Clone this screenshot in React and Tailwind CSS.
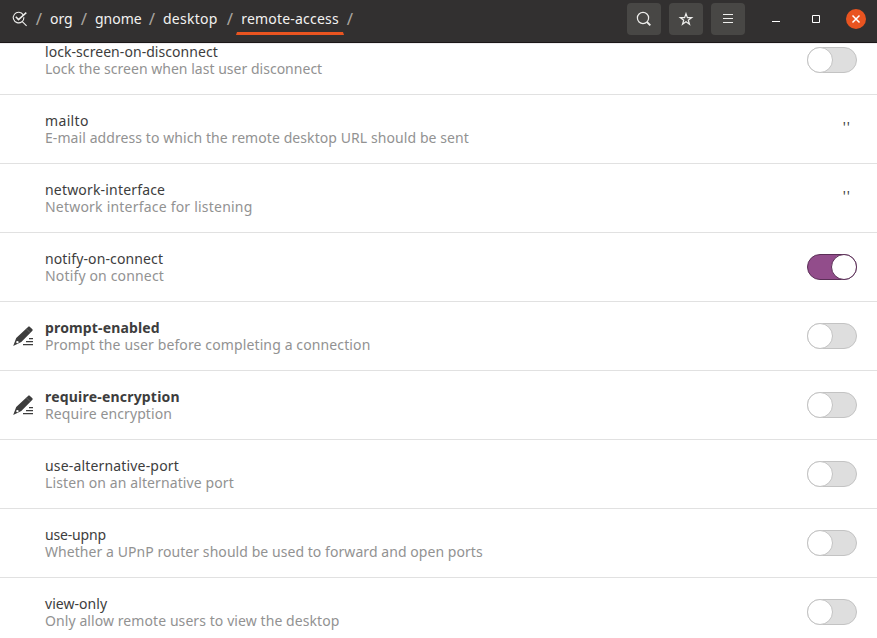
const rows = [
  { key: 'lock-screen-on-disconnect', text: 'Lock the screen when last user disconnect', on: false, kt: 'tracking-[0.06px]', dt: 'tracking-[0.02px]' },
  { key: 'mailto', text: 'E-mail address to which the remote desktop URL should be sent', value: "''", kt: 'tracking-[0.35px]', dt: 'tracking-[0.08px]' },
  { key: 'network-interface', text: 'Network interface for listening', value: "''", kt: 'tracking-[0.18px]', dt: 'tracking-[0.21px]' },
  { key: 'notify-on-connect', text: 'Notify on connect', on: true, kt: 'tracking-[0.12px]', dt: 'tracking-[0.16px]' },
  { key: 'prompt-enabled', text: 'Prompt the user before completing a connection', on: false, edited: true, kt: 'tracking-[0.15px]', dt: 'tracking-[0.12px]' },
  { key: 'require-encryption', text: 'Require encryption', on: false, edited: true, kt: 'tracking-[0.2px]', dt: 'tracking-[0.11px]' },
  { key: 'use-alternative-port', text: 'Listen on an alternative port', on: false, kt: 'tracking-[0.17px]', dt: 'tracking-[0.11px]' },
  { key: 'use-upnp', text: 'Whether a UPnP router should be used to forward and open ports', on: false, kt: 'tracking-[-0.18px]', dt: 'tracking-[0.06px]' },
  { key: 'view-only', text: 'Only allow remote users to view the desktop', on: false, kt: 'tracking-[0.05px]', dt: 'tracking-[0.08px]' },
];

function Toggle({ on }) {
  return (
    <div className={`flex h-[26px] w-[50px] rounded-full border ${on ? 'justify-end border-[#5b2f57] bg-[#924d8b]' : 'justify-start border-[#c3c3c3] bg-[#dedede]'}`}>
      <div className={`-m-px size-[26px] rounded-full border bg-white ${on ? 'border-[#5b2f57]' : 'border-[#c3c3c3]'}`} />
    </div>
  );
}

function EditIcon() {
  return (
    <svg width="22" height="22" viewBox="0 0 22 22" fill="#3d3d3d">
      <path d="M16.3 1.7a1 1 0 0 1 1.4 0l2.7 2.6a1 1 0 0 1 0 1.4L9.3 17 1.2 21l3-8z" />
      <circle cx="5.4" cy="17.1" r="1.2" fill="#fff" />
      <path d="M14.3 3.8l3.8 3.8" stroke="#888" strokeWidth="0.5" />
      <path d="M17 13h4v1.2h-4zM14 16h7v1.2h-7zM11 19h10v1.2H11z" />
    </svg>
  );
}

function Row({ row }) {
  return (
    <div className="flex h-[69px] shrink-0 items-center border-b border-[#e1e1e1] pr-5">
      <div className="flex w-[45px] shrink-0 pl-3">{row.edited && <EditIcon />}</div>
      <div className="flex-1 whitespace-nowrap text-[14px] leading-[17px]">
        <div className={`text-[#3d3d3d] ${row.kt} ${row.edited ? 'font-bold' : ''}`}>{row.key}</div>
        <div className={`text-[#929292] ${row.dt}`}>{row.text}</div>
      </div>
      {row.value ? <span className="pr-[6px] pb-[6px] text-[14px] leading-[17px] tracking-[1px] text-[#3d3d3d]">{row.value}</span> : <Toggle on={row.on} />}
    </div>
  );
}

function HeaderButton({ children }) {
  return <button className="flex h-8 w-[34px] items-center justify-center rounded-[4px] bg-[#484745]">{children}</button>;
}

function Slash() {
  return <span className="flex w-[22px] justify-center text-[17px] text-[#a9a49f]">/</span>;
}

const crumbs = [
  { name: 'org', cls: 'w-[23px]' },
  { name: 'gnome', cls: 'w-[46px]' },
  { name: 'desktop', cls: 'w-[56px] tracking-[0.25px]' },
];

export default function App() {
  return (
    <div className="flex h-[638px] w-[877px] flex-col overflow-hidden bg-white font-['Noto_Sans','Open_Sans',sans-serif]">
      <header className="z-10 flex h-[43px] shrink-0 items-center border-b border-[#1b1718] bg-[#323030] text-[14px] text-[#f2f2f0] shadow-[0_1px_0_#efedef]">
        <svg className="mb-1 ml-3" width="16" height="16" viewBox="0 0 16 16" fill="none" stroke="#eeeeec">
          <path d="M11.2 3.9A5.3 5.3 0 1 0 11.9 6.2M10.6 10.8l4 4" strokeWidth="1.1" />
          <path d="M3.8 5.8l2.7 2.8 7.8-7" strokeWidth="1.5" />
        </svg>
        <nav className="flex h-full items-start whitespace-nowrap leading-[38px]">
          <Slash />
          {crumbs.map((c) => (
            <div key={c.name} className="flex">
              <span className={c.cls}>{c.name}</span>
              <Slash />
            </div>
          ))}
          <span className="-mx-[5px] flex h-[35px] w-[108px] justify-center border-x border-b-3 border-x-transparent border-b-[#e95420] tracking-[0.2px]">remote-access</span>
          <Slash />
        </nav>
        <div className="ml-auto flex gap-2 pb-[5px]">
          <HeaderButton>
            <svg width="16" height="16" viewBox="0 0 16 16" fill="none" stroke="#eeeeec" strokeWidth="1.2"><circle cx="7" cy="7" r="5.6" /><path d="M11 11l3.3 3.3" strokeWidth="1.8" /></svg>
          </HeaderButton>
          <HeaderButton>
            <svg width="16" height="16" viewBox="0 0 16 16" fill="none" stroke="#eeeeec" strokeWidth="1.2"><path d="M8 2.6l1.4 4h4.3l-3.4 2.6 1.2 4.1L8 10.8l-3.5 2.5 1.2-4.1-3.4-2.6h4.3z" /></svg>
          </HeaderButton>
          <HeaderButton>
            <svg width="16" height="16" viewBox="0 0 16 16" fill="#eeeeec"><path d="M3 3h10v1H3zM3 7h10v1H3zM3 11h10v1H3z" /></svg>
          </HeaderButton>
        </div>
        <div className="flex items-center pr-[11px] pb-[4px] pl-[23px]">
          <svg width="16" height="16" viewBox="0 0 16 16"><path d="M4 10h8v1H4z" fill="#fff" /></svg>
          <svg className="ml-6" width="16" height="16" viewBox="0 0 16 16"><path d="M4.5 4.5h7v7h-7z" fill="none" stroke="#fff" /></svg>
          <svg className="ml-[22px]" width="20" height="20" viewBox="0 0 20 20"><circle cx="10" cy="10" r="10" fill="#e95420" /><path d="M6.5 6.5l7 7M13.5 6.5l-7 7" stroke="#fff" strokeWidth="1.5" /></svg>
        </div>
      </header>
      <main className="-mt-[17px] flex flex-col">
        {rows.map((row) => <Row key={row.key} row={row} />)}
      </main>
    </div>
  );
}
